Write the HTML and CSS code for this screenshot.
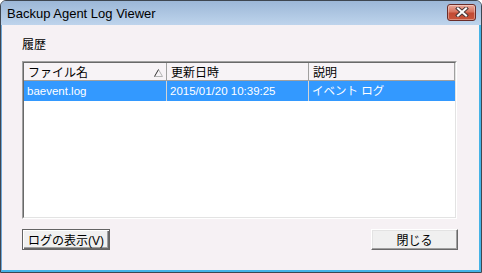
FILE: index.html
```html
<!DOCTYPE html>
<html lang="ja">
<head>
    <meta charset="UTF-8">
    <link rel="stylesheet" href="styles.css">
</head>
<body>
    <div class="window">
        <div class="titlebar">
            <span class="title">Backup Agent Log Viewer</span>
            <button class="close-btn">
                <svg width="14" height="10" viewBox="0 0 14 10">
                    <path d="M3 1.5 L11 8.5 M11 1.5 L3 8.5" stroke="#4a3a3a" stroke-width="4" stroke-linecap="square"/>
                    <path d="M3 1.5 L11 8.5 M11 1.5 L3 8.5" stroke="#ffffff" stroke-width="2" stroke-linecap="square"/>
                </svg>
            </button>
        </div>

        <div class="client">
            <div class="group-label">履歴</div>

            <div class="listview">
                <div class="lv-inner">
                    <div class="lv-header">
                        <div class="lv-col col-name">
                            <span>ファイル名</span>
                            <svg class="sort-icon" width="9" height="8" viewBox="0 0 9 8">
                                <path d="M4.5 0.5 L8.5 7.5 L0.5 7.5" stroke="#b4b4b4" stroke-width="1" fill="none"/>
                                <path d="M0.5 7.5 L4.5 0.5" stroke="#303030" stroke-width="1" fill="none"/>
                            </svg>
                        </div>
                        <div class="lv-col col-date">更新日時</div>
                        <div class="lv-col col-desc">説明</div>
                    </div>
                    <div class="lv-row selected">
                        <div class="lv-cell col-name">baevent.log</div>
                        <div class="lv-cell col-date">2015/01/20 10:39:25</div>
                        <div class="lv-cell col-desc">イベント ログ</div>
                    </div>
                </div>
            </div>

            <div class="button-row">
                <button class="btn btn-default">ログの表示(V)</button>
                <button class="btn btn-close">閉じる</button>
            </div>
        </div>
    </div>
</body>
</html>
```

FILE: styles.css
```css
/* base */
html, body {
    margin: 0;
    padding: 0;
    background: #ffffff;
}

body {
    font-family: "Liberation Sans", "Noto Sans CJK JP", sans-serif;
    font-size: 12px;
    color: #000000;
}

/* window frame */
.window {
    width: 482px;
    height: 273px;
    box-sizing: border-box;
    border: 1px solid #3e4650;
    border-radius: 6px 6px 0 0;
    display: flex;
    flex-direction: column;
    overflow: hidden;
    background: #b9d1ea;
}

.titlebar {
    height: 24px;
    flex: none;
    display: flex;
    align-items: center;
    justify-content: space-between;
    padding: 0 5px 0 6px;
    background: linear-gradient(#9cb7d7, #bed4ec);
}

.title {
    font-size: 13px;
    color: #000000;
    padding-top: 1px;
}

.close-btn {
    width: 29px;
    height: 17px;
    padding: 0;
    margin-top: -2px;
    border: 1px solid #6a2c28;
    border-radius: 3px;
    background: linear-gradient(#eaa99b 0%, #d7745f 45%, #c24a33 55%, #c9553b 100%);
    box-shadow: inset 0 0 0 1px rgba(255, 255, 255, 0.35);
    display: flex;
    align-items: center;
    justify-content: center;
}

/* client area */
.client {
    flex: 1;
    display: flex;
    flex-direction: column;
    background: #f6f1f4;
    border-left: 1px solid #6fa8d8;
    border-right: 2px solid #45b3e6;
    border-bottom: 2px solid #45b3e6;
    padding: 12px 22px 0 20px;
}

.group-label {
    height: 16px;
    line-height: 16px;
    margin-bottom: 8px;
}

/* list view */
.listview {
    height: 158px;
    box-sizing: border-box;
    border: 1px solid;
    border-color: #a0a0a0 #ffffff #ffffff #a0a0a0;
}

.lv-inner {
    height: 100%;
    box-sizing: border-box;
    border: 1px solid;
    border-color: #696969 #e3e3e3 #e3e3e3 #696969;
    background: #ffffff;
}

.lv-header {
    display: flex;
    height: 18px;
    box-sizing: border-box;
    background: #f7f3f6;
    border-bottom: 1px solid #a0a0a0;
}

.lv-col {
    display: flex;
    align-items: center;
    padding-left: 4px;
    box-sizing: border-box;
    border-right: 1px solid #a0a0a0;
}

.col-name {
    width: 143px;
}

.col-date {
    width: 142px;
}

.col-desc {
    flex: 1;
}

.lv-header .col-name {
    justify-content: space-between;
    padding-right: 3px;
}

.sort-icon {
    margin-top: 2px;
}

.lv-row {
    display: flex;
    height: 20px;
}

.lv-cell {
    box-sizing: border-box;
    padding-left: 3px;
    font-size: 11.5px;
    line-height: 20px;
    border-right: 1px solid #d4d4d4;
    white-space: nowrap;
}

.lv-row .col-desc {
    border-right: none;
}

.lv-row.selected {
    background: #3399ff;
    color: #ffffff;
}

/* buttons */
.button-row {
    display: flex;
    justify-content: space-between;
    margin-top: 10px;
}

.btn {
    height: 21px;
    box-sizing: border-box;
    padding: 0;
    font-family: "Liberation Sans", "Noto Sans CJK JP", sans-serif;
    font-size: 12px;
    color: #000000;
    background: #f0f0f0;
    border: 1px solid;
    border-color: #ffffff #696969 #696969 #ffffff;
    box-shadow: inset -1px -1px 0 #a0a0a0, inset 1px 1px 0 #e3e3e3;
}

.btn-default {
    width: 88px;
    border-color: #646464;
    box-shadow: inset 1px 1px 0 #ffffff, inset -1px -1px 0 #696969, inset -2px -2px 0 #a0a0a0;
}

.btn-close {
    width: 87px;
    margin-right: -1px;
}
```
